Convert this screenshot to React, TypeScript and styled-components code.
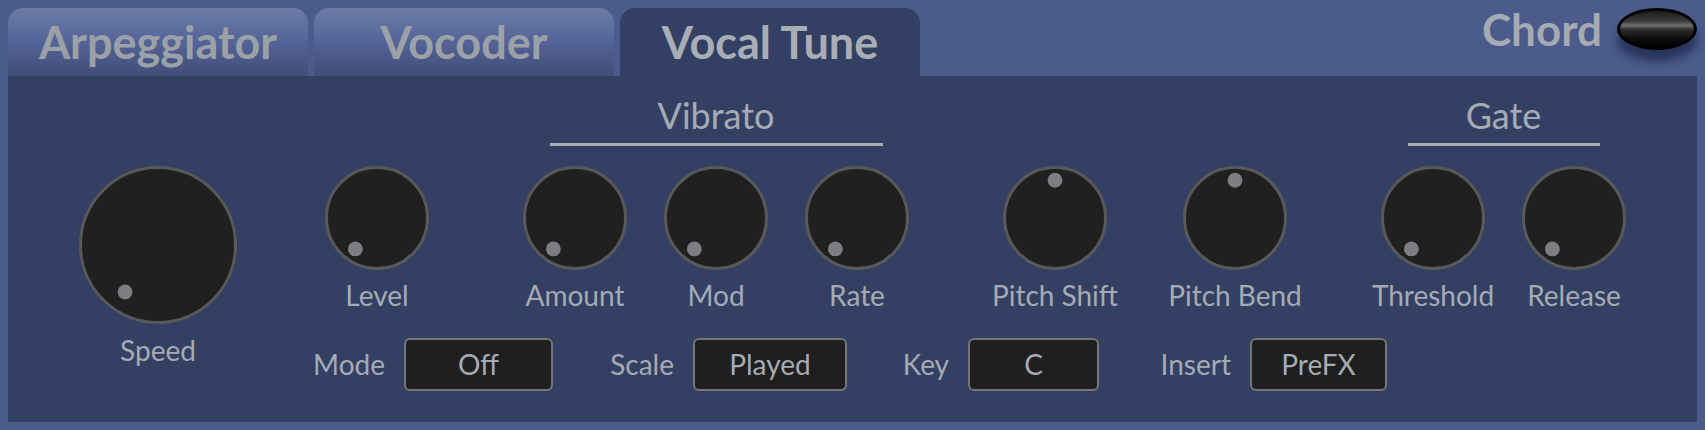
import React from 'react';
import styled, { createGlobalStyle } from 'styled-components';

const GlobalStyle = createGlobalStyle`
  html, body {
    margin: 0;
    padding: 0;
    background: #4a5b8c;
  }
  body {
    font-family: Lato, 'Noto Sans', sans-serif;
  }
`;

const Frame = styled.div`
  width: 1705px;
  height: 430px;
  box-sizing: border-box;
  padding: 8px 8px 0 8px;
  background: #4a5b8c;
`;

const TabBar = styled.div`
  display: flex;
  align-items: flex-end;
  height: 68px;
`;

const Tab = styled.div<{ $active?: boolean }>`
  width: 300px;
  height: 68px;
  margin-right: 6px;
  border-radius: 15px 15px 0 0;
  background: ${p => (p.$active ? '#334064' : 'linear-gradient(180deg, #6c7ca6 0%, #56669a 45%, #3f4d77 100%)')};
  color: ${p => (p.$active ? '#a9aeb6' : '#9ca1a8')};
  font-size: 45px;
  font-weight: 700;
  line-height: 1.2;
  display: flex;
  align-items: center;
  justify-content: center;
`;

const ChordArea = styled.div`
  margin-left: auto;
  align-self: flex-start;
  display: flex;
  align-items: center;
  gap: 15px;
  height: 42px;
`;

const ChordLabel = styled.span`
  font-size: 44px;
  font-weight: 700;
  line-height: 1.2;
  color: #a6abb3;
`;

const Toggle = styled.div`
  width: 80px;
  height: 42px;
  box-sizing: border-box;
  border-radius: 50%;
  border: 3px solid #000;
  background: linear-gradient(180deg, #1c1c1c 0%, #3a3a3a 28%, #707070 40%, #2c2c2c 52%, #0e0e0e 75%, #000 100%);
  box-shadow: 0 11px 9px rgba(10, 15, 40, 0.5);
`;

const Panel = styled.div`
  height: 346px;
  box-sizing: border-box;
  background: #334064;
  display: flex;
  align-items: flex-start;
  padding-top: 17.5px;
  color: #a6abb3;
`;

const SpeedColumn = styled.div`
  width: 180px;
  margin-left: 60px;
  margin-top: 72.2px;
  display: flex;
  flex-direction: column;
  align-items: center;
`;

const Main = styled.div`
  margin-left: 58.5px;
  display: flex;
  flex-direction: column;
`;

const KnobRow = styled.div`
  display: flex;
  align-items: flex-end;
`;

const Group = styled.div<{ $offset?: number }>`
  display: flex;
  flex-direction: column;
  margin-left: ${p => p.$offset ?? 0}px;
`;

const GroupTitle = styled.div`
  font-size: 36px;
  line-height: 1.2;
  text-align: center;
`;

const GroupRule = styled.div`
  height: 3px;
  margin: 6.3px 45px 0;
  background: #a9adb5;
`;

const Knobs = styled.div<{ $gap?: number; $titled?: boolean }>`
  display: flex;
  gap: ${p => p.$gap ?? 0}px;
  margin-top: ${p => (p.$titled ? 19.7 : 0)}px;
`;

const KnobColumn = styled.div`
  width: 141px;
  display: flex;
  flex-direction: column;
  align-items: center;
`;

const KnobLabel = styled.div<{ $gap: number }>`
  margin-top: ${p => p.$gap}px;
  font-size: 28px;
  line-height: 1.2;
  white-space: nowrap;
`;

const SelectRow = styled.div`
  display: flex;
  align-items: center;
  margin-top: 25px;
`;

const Field = styled.div`
  display: flex;
  align-items: center;
`;

const FieldLabel = styled.div<{ $width: number }>`
  width: ${p => p.$width}px;
  box-sizing: border-box;
  padding-right: 19px;
  text-align: right;
  font-size: 28px;
  line-height: 1.2;
`;

const SelectBox = styled.div<{ $width: number }>`
  width: ${p => p.$width}px;
  height: 53px;
  box-sizing: border-box;
  border: 2px solid #767676;
  border-radius: 6px;
  background: #1f1f1f;
  display: flex;
  align-items: center;
  justify-content: center;
  font-size: 28px;
  line-height: 1.2;
  color: #a6abb3;
`;

const KnobDial: React.FC<{ size: number; angle: number }> = ({ size, angle }) => {
  const c = size / 2;
  const d = size * 0.363;
  const rad = (angle * Math.PI) / 180;
  const dx = c + d * Math.sin(rad);
  const dy = c - d * Math.cos(rad);
  return (
    <svg width={size} height={size} viewBox={`0 0 ${size} ${size}`}>
      <circle cx={c} cy={c} r={c - 1.5} fill="#202020" stroke="#595959" strokeWidth={3} />
      <circle cx={dx} cy={dy} r={7.4} fill="#7d7e82" />
    </svg>
  );
};

const Knob: React.FC<{ label: string; angle?: number }> = ({ label, angle = -145 }) => (
  <KnobColumn>
    <KnobDial size={104} angle={angle} />
    <KnobLabel $gap={9.7}>{label}</KnobLabel>
  </KnobColumn>
);

const fields = [
  { label: 'Mode', value: 'Off', labelWidth: 97.5, boxWidth: 149 },
  { label: 'Scale', value: 'Played', labelWidth: 140, boxWidth: 154 },
  { label: 'Key', value: 'C', labelWidth: 121, boxWidth: 131 },
  { label: 'Insert', value: 'PreFX', labelWidth: 151, boxWidth: 137 },
];

const App: React.FC = () => {
  return (
    <Frame>
      <GlobalStyle />
      <TabBar>
        <Tab>Arpeggiator</Tab>
        <Tab>Vocoder</Tab>
        <Tab $active>Vocal Tune</Tab>
        <ChordArea>
          <ChordLabel>Chord</ChordLabel>
          <Toggle />
        </ChordArea>
      </TabBar>

      <Panel>
        <SpeedColumn>
          <KnobDial size={158} angle={-145} />
          <KnobLabel $gap={10.4}>Speed</KnobLabel>
        </SpeedColumn>

        <Main>
          <KnobRow>
            <Group>
              <Knobs>
                <Knob label="Level" />
              </Knobs>
            </Group>

            <Group $offset={57}>
              <GroupTitle>Vibrato</GroupTitle>
              <GroupRule />
              <Knobs $titled>
                <Knob label="Amount" />
                <Knob label="Mod" />
                <Knob label="Rate" />
              </Knobs>
            </Group>

            <Group $offset={57}>
              <Knobs $gap={39}>
                <Knob label="Pitch Shift" angle={0} />
                <Knob label="Pitch Bend" angle={0} />
              </Knobs>
            </Group>

            <Group $offset={57}>
              <GroupTitle>Gate</GroupTitle>
              <GroupRule />
              <Knobs $titled>
                <Knob label="Threshold" />
                <Knob label="Release" />
              </Knobs>
            </Group>
          </KnobRow>

          <SelectRow>
            {fields.map(f => (
              <Field key={f.label}>
                <FieldLabel $width={f.labelWidth}>{f.label}</FieldLabel>
                <SelectBox $width={f.boxWidth}>{f.value}</SelectBox>
              </Field>
            ))}
          </SelectRow>
        </Main>
      </Panel>
    </Frame>
  );
};

export default App;
